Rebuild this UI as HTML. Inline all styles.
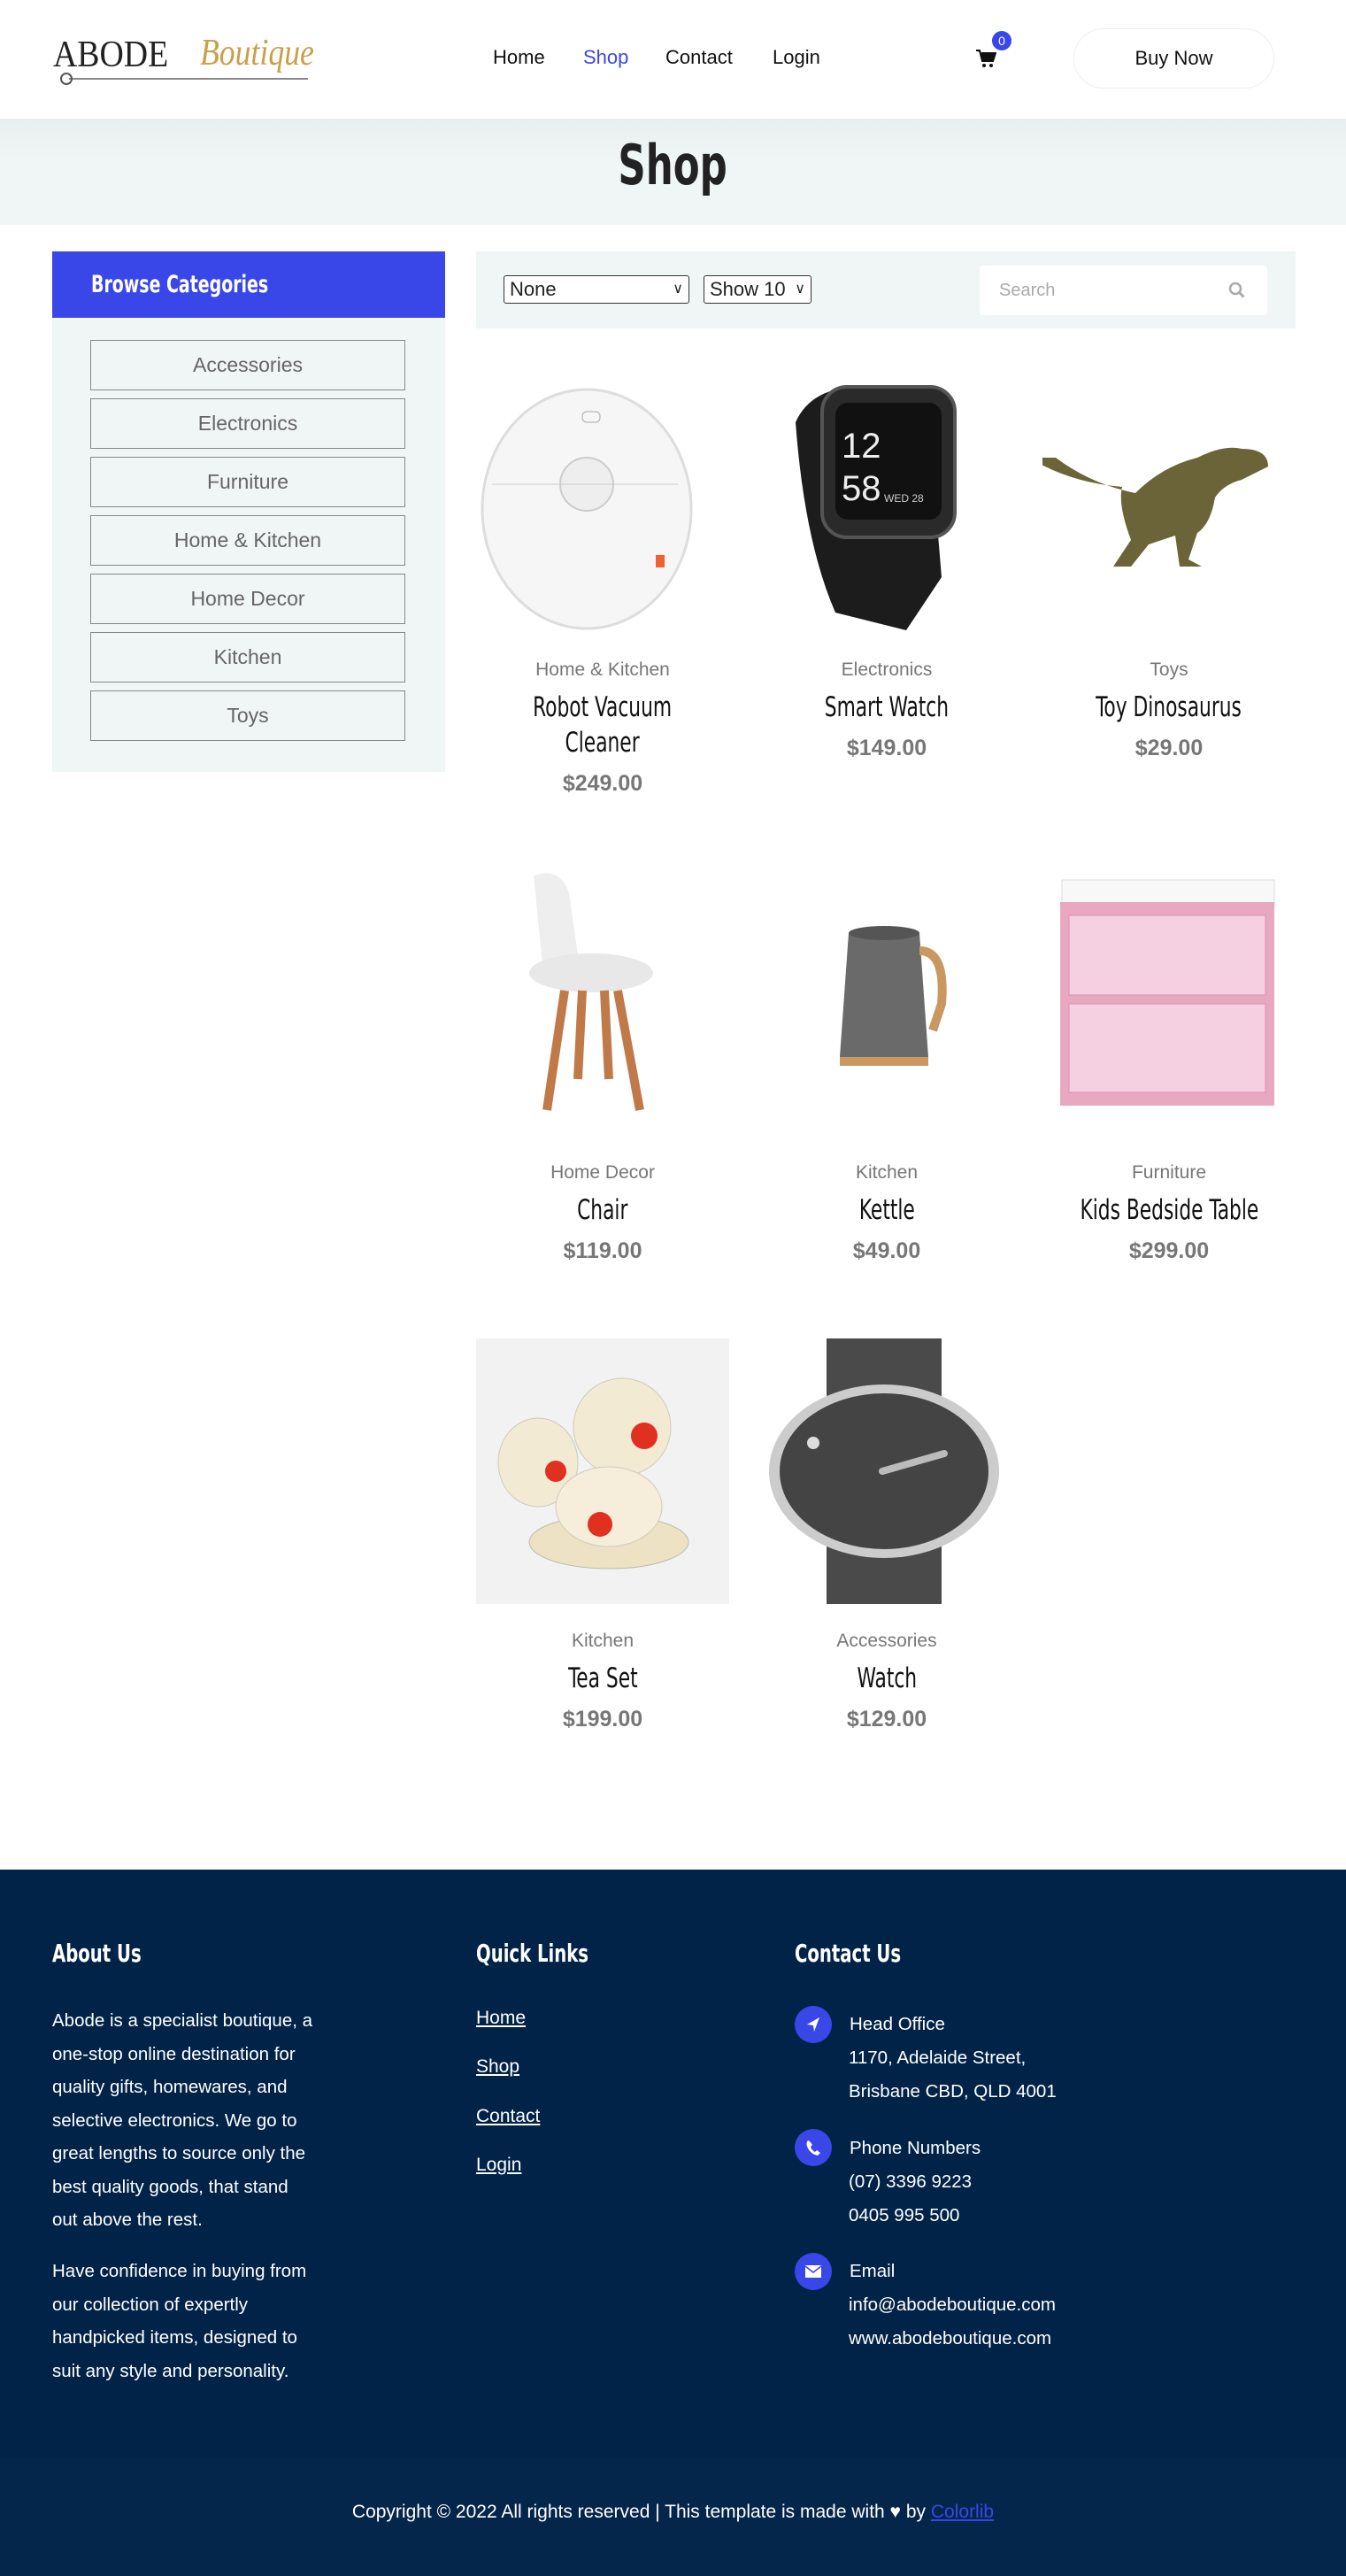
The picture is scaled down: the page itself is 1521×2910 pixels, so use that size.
<!DOCTYPE html>
<html><head><meta charset="utf-8">
<style>
*{box-sizing:border-box;margin:0;padding:0}
body{width:1521px;height:2910px;background:#fff;font-family:"Liberation Sans",sans-serif;position:relative;overflow:hidden;color:#222}
.cond{font-family:"DejaVu Sans Condensed","Liberation Sans",sans-serif}
.sq{display:inline-block;transform:scaleX(.78);transform-origin:center}
.sql{display:inline-block;transform:scaleX(.78);transform-origin:left}
.abs{position:absolute}
.nav a{position:absolute;top:52px;font-size:22px;color:#111;text-decoration:none}
.cat{position:absolute;left:102px;width:356px;height:57px;border:1.5px solid #888;background:#f0f5f5;text-align:center;line-height:54px;font-size:23px;color:#666}
.prod{position:absolute;width:286px;text-align:center}
.prod .c{font-size:21px;color:#777}
.prod .t{font-size:31px;color:#111;line-height:40px;margin-top:10px}
.prod .p{font-size:25px;color:#777;font-weight:bold;margin-top:12px}
.fh{position:absolute;top:2190px;font-size:28px;font-weight:bold;color:#fff}
.fp{font-size:20.5px;line-height:37.5px;color:#fff;white-space:nowrap}
.ql{position:absolute;left:538px;font-size:21px;color:#fff;text-decoration:underline}
.ic{position:absolute;left:898px;width:42px;height:42px;border-radius:50%;background:#3a47e8}
</style></head><body>
<!-- header -->
<div class="abs" style="left:60px;top:38px;font-family:'Liberation Serif',serif;font-size:42px;color:#222;transform:scaleX(.9);transform-origin:left">ABODE</div>
<div class="abs" style="left:226px;top:36px;font-family:'Liberation Serif',serif;font-style:italic;font-size:42px;color:#c9a04a;transform:scaleX(.85);transform-origin:left">Boutique</div>
<div class="abs" style="left:78px;top:88px;width:270px;height:2px;background:#888"></div>
<div class="abs" style="left:68px;top:82px;width:14px;height:14px;border:2px solid #555;border-radius:50%"></div>
<div class="nav">
<a style="left:557px">Home</a><a style="left:659px;color:#3a47e8">Shop</a><a style="left:752px">Contact</a><a style="left:873px">Login</a>
</div>
<svg class="abs" style="left:1102px;top:54px" width="24" height="24" viewBox="0 0 24 24"><path d="M1 3h4l3 12h12l3-9H7" fill="#111" stroke="#111" stroke-width="2"/><circle cx="10" cy="20" r="2" fill="#111"/><circle cx="18" cy="20" r="2" fill="#111"/></svg>
<div class="abs" style="left:1121px;top:35px;width:22px;height:22px;border-radius:50%;background:#3a47e8;color:#fff;font-size:14px;text-align:center;line-height:22px">0</div>
<div class="abs" style="left:1213px;top:32px;width:227px;height:68px;border:1.5px solid #eee;border-radius:34px;text-align:center;line-height:66px;font-size:22px;color:#111">Buy Now</div>
<!-- banner -->
<div class="abs" style="left:0;top:134px;width:1521px;height:120px;background:linear-gradient(#e9eeee,#f0f5f5 40%)"></div>
<div class="abs cond" style="left:0;top:150px;width:1521px;text-align:center;font-size:62px;font-weight:bold;color:#222"><span class="sq">Shop</span></div>
<!-- sidebar -->
<div class="abs" style="left:59px;top:284px;width:444px;height:588px;background:#f0f5f5"></div>
<div class="abs cond" style="left:59px;top:284px;width:444px;height:75px;background:#3a47e8;color:#fff;font-size:27px;font-weight:bold;line-height:75px;padding-left:44px"><span class="sql">Browse Categories</span></div>
<div class="cat" style="top:384px">Accessories</div>
<div class="cat" style="top:450px">Electronics</div>
<div class="cat" style="top:516px">Furniture</div>
<div class="cat" style="top:582px">Home &amp; Kitchen</div>
<div class="cat" style="top:648px">Home Decor</div>
<div class="cat" style="top:714px">Kitchen</div>
<div class="cat" style="top:780px">Toys</div>
<!-- filter bar -->
<div class="abs" style="left:538px;top:284px;width:926px;height:87px;background:#f0f5f5"></div>
<div class="abs" style="left:569px;top:311px;width:210px;height:32px;border:1.5px solid #333;border-radius:3px;background:#fff;font-size:22px;line-height:29px;padding-left:6px">None<span style="position:absolute;right:6px;font-size:16px">&#8744;</span></div>
<div class="abs" style="left:795px;top:311px;width:122px;height:32px;border:1.5px solid #333;border-radius:3px;background:#fff;font-size:22px;line-height:29px;padding-left:6px">Show 10<span style="position:absolute;right:6px;font-size:16px">&#8744;</span></div>
<div class="abs" style="left:1107px;top:300px;width:325px;height:56px;background:#fff;border-radius:4px;font-size:20px;color:#aaa;line-height:56px;padding-left:22px">Search</div>
<svg class="abs" style="left:1388px;top:318px" width="20" height="20" viewBox="0 0 20 20"><circle cx="8" cy="8" r="6" fill="none" stroke="#aaa" stroke-width="2.5"/><path d="M12.5 12.5l5 5" stroke="#aaa" stroke-width="3"/></svg>

<!-- products row1 -->
<svg class="abs" style="left:538px;top:417px" width="286" height="306" viewBox="0 0 286 306"><ellipse cx="125" cy="158" rx="118" ry="135" fill="#f6f6f6" stroke="#ddd" stroke-width="3"/><circle cx="125" cy="130" r="30" fill="#eee" stroke="#ccc" stroke-width="2"/><path d="M18 130h210" stroke="#ccc"/><rect x="120" y="48" width="20" height="12" rx="5" fill="none" stroke="#aaa"/><rect x="215" y="270" width="10" height="14" fill="#f06030" transform="translate(-12,-60)"/></svg>
<svg class="abs" style="left:859px;top:417px" width="286" height="306" viewBox="0 0 286 306"><path d="M40 60q20-45 90-40l40 5 20 30 15 180-40 60-80-20q-35-80-45-215z" fill="#1c1c1c"/><rect x="70" y="20" width="150" height="170" rx="28" fill="#2a2a2a" stroke="#555" stroke-width="4"/><rect x="85" y="38" width="120" height="132" rx="14" fill="#111"/><text x="92" y="100" fill="#eee" font-size="40" font-family="Liberation Sans,sans-serif">12</text><text x="92" y="148" fill="#eee" font-size="40" font-family="Liberation Sans,sans-serif">58</text><text x="140" y="150" fill="#ccc" font-size="12">WED 28</text></svg>
<svg class="abs" style="left:1178px;top:417px" width="286" height="306" viewBox="0 0 286 306"><path d="M15 100q40 30 90 40 30-30 70-40 30-15 50-10 30 0 30 20l-30 15q-20 5-30 20-5 30-20 40l-10 30 15 8-25 0-5-35-30 10-20 25h-20l20-30q-15-40-10-60-60-5-105-33z" fill="#6b6438"/></svg>
<div class="prod" style="left:538px;top:745px"><div class="c">Home &amp; Kitchen</div><div class="t cond"><span class="sq">Robot Vacuum<br>Cleaner</span></div><div class="p">$249.00</div></div>
<div class="prod" style="left:859px;top:745px"><div class="c">Electronics</div><div class="t cond"><span class="sq">Smart Watch</span></div><div class="p">$149.00</div></div>
<div class="prod" style="left:1178px;top:745px"><div class="c">Toys</div><div class="t cond"><span class="sq">Toy Dinosaurus</span></div><div class="p">$29.00</div></div>

<!-- row2 -->
<svg class="abs" style="left:538px;top:974px" width="286" height="316" viewBox="0 0 286 316"><path d="M65 15q30-10 40 20l10 70 -40 10z" fill="#eee"/><ellipse cx="130" cy="125" rx="70" ry="22" fill="#e8e8e8"/><path d="M100 145l-20 135M160 145l25 135M120 145l-5 100M145 145l5 100" stroke="#c07a4a" stroke-width="10"/></svg>
<svg class="abs" style="left:859px;top:974px" width="286" height="316" viewBox="0 0 286 316"><path d="M100 80h80l10 140H90z" fill="#6a6a6a"/><path d="M180 100q30 0 25 60l-10 30" stroke="#c89860" stroke-width="10" fill="none"/><rect x="90" y="220" width="100" height="10" fill="#c89860"/><ellipse cx="140" cy="80" rx="40" ry="8" fill="#555"/></svg>
<svg class="abs" style="left:1178px;top:974px" width="286" height="316" viewBox="0 0 286 316"><rect x="22" y="20" width="240" height="30" fill="#f8f8f8" stroke="#ddd"/><rect x="20" y="45" width="242" height="230" fill="#e8a8c0"/><rect x="30" y="60" width="222" height="90" fill="#f4d0e0" stroke="#d890b0"/><rect x="30" y="160" width="222" height="100" fill="#f4d0e0" stroke="#d890b0"/></svg>
<div class="prod" style="left:538px;top:1313px"><div class="c">Home Decor</div><div class="t cond"><span class="sq">Chair</span></div><div class="p">$119.00</div></div>
<div class="prod" style="left:859px;top:1313px"><div class="c">Kitchen</div><div class="t cond"><span class="sq">Kettle</span></div><div class="p">$49.00</div></div>
<div class="prod" style="left:1178px;top:1313px"><div class="c">Furniture</div><div class="t cond"><span class="sq">Kids Bedside Table</span></div><div class="p">$299.00</div></div>

<!-- row3 -->
<svg class="abs" style="left:538px;top:1512px" width="286" height="300" viewBox="0 0 286 300"><rect width="286" height="300" fill="#f2f2f2"/><ellipse cx="70" cy="140" rx="45" ry="50" fill="#f3ead4" stroke="#ccb" /><ellipse cx="165" cy="100" rx="55" ry="55" fill="#f3ead4" stroke="#ccb"/><ellipse cx="150" cy="230" rx="90" ry="30" fill="#eee2c4" stroke="#bba"/><ellipse cx="150" cy="190" rx="60" ry="45" fill="#f6eedb" stroke="#ccb"/><circle cx="190" cy="110" r="15" fill="#e03020"/><circle cx="90" cy="150" r="12" fill="#e03020"/><circle cx="140" cy="210" r="14" fill="#e03020"/></svg>
<svg class="abs" style="left:859px;top:1512px" width="286" height="300" viewBox="0 0 286 300"><rect x="75" y="0" width="130" height="300" fill="#4a4a4a"/><ellipse cx="140" cy="150" rx="130" ry="98" fill="#ccc"/><ellipse cx="140" cy="150" rx="118" ry="88" fill="#444"/><path d="M138 150l70-20" stroke="#bbb" stroke-width="8" stroke-linecap="round"/><circle cx="60" cy="118" r="7" fill="#ddd"/></svg>
<div class="prod" style="left:538px;top:1842px"><div class="c">Kitchen</div><div class="t cond"><span class="sq">Tea Set</span></div><div class="p">$199.00</div></div>
<div class="prod" style="left:859px;top:1842px"><div class="c">Accessories</div><div class="t cond"><span class="sq">Watch</span></div><div class="p">$129.00</div></div>

<!-- footer -->
<div class="abs" style="left:0;top:2112px;width:1521px;height:665px;background:#012348"></div>
<div class="abs" style="left:0;top:2777px;width:1521px;height:133px;background:#04264a"></div>
<div class="fh cond" style="left:59px"><span class="sql">About Us</span></div>
<div class="fh cond" style="left:538px"><span class="sql">Quick Links</span></div>
<div class="fh cond" style="left:898px"><span class="sql">Contact Us</span></div>
<div class="abs fp" style="left:59px;top:2264px">Abode is a specialist boutique, a<br>one-stop online destination for<br>quality gifts, homewares, and<br>selective electronics. We go to<br>great lengths to source only the<br>best quality goods, that stand<br>out above the rest.</div>
<div class="abs fp" style="left:59px;top:2547px">Have confidence in buying from<br>our collection of expertly<br>handpicked items, designed to<br>suit any style and personality.</div>
<div class="ql" style="top:2268px">Home</div>
<div class="ql" style="top:2323px">Shop</div>
<div class="ql" style="top:2379px">Contact</div>
<div class="ql" style="top:2434px">Login</div>
<div class="ic" style="top:2266px"><svg width="42" height="42" viewBox="0 0 42 42"><path d="M28 13L14 21l7 1 1 7z" fill="#fff"/></svg></div>
<div class="ic" style="top:2405px"><svg width="42" height="42" viewBox="0 0 42 42"><path d="M15 13q-3 3 0 9 4 7 11 8l3-3-4-3-2 2q-4-2-5-6l2-2-3-4z" fill="#fff"/></svg></div>
<div class="ic" style="top:2545px"><svg width="42" height="42" viewBox="0 0 42 42"><rect x="12" y="14" width="18" height="14" fill="#fff"/><path d="M12 15l9 7 9-7" stroke="#3a47e8" stroke-width="1.5" fill="none"/></svg></div>
<div class="abs fp" style="left:960px;top:2268px">Head Office</div>
<div class="abs fp" style="left:959px;top:2306px">1170, Adelaide Street,<br>Brisbane CBD, QLD 4001</div>
<div class="abs fp" style="left:960px;top:2408px">Phone Numbers</div>
<div class="abs fp" style="left:959px;top:2446px">(07) 3396 9223<br>0405 995 500</div>
<div class="abs fp" style="left:960px;top:2547px">Email</div>
<div class="abs fp" style="left:959px;top:2585px">info@abodeboutique.com<br>www.abodeboutique.com</div>
<div class="abs" style="left:0;top:2826px;width:1521px;text-align:center;font-size:21px;color:#fff">Copyright © 2022 All rights reserved | This template is made with &#9829; by <span style="color:#3a47e8;text-decoration:underline">Colorlib</span></div>
</body></html>
